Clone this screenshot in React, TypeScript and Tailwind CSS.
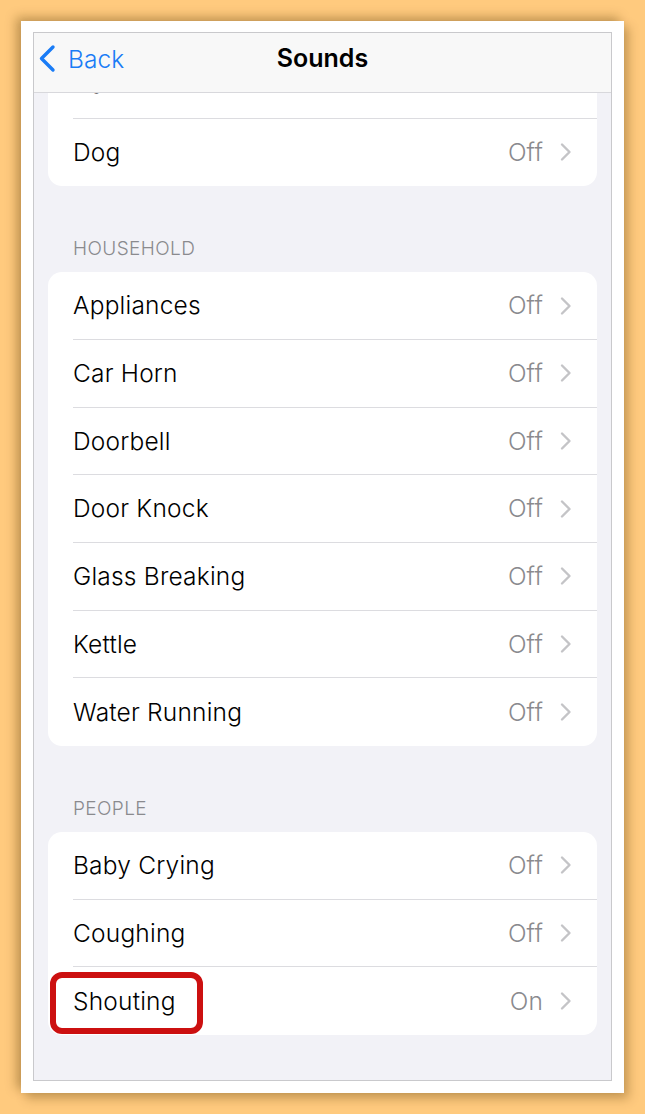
import React from "react";

type Row = { label: string; value: string; marked?: boolean };

const animals: Row[] = [
  { label: "Cat", value: "Off" },
  { label: "Dog", value: "Off" },
];

const household: Row[] = [
  { label: "Appliances", value: "Off" },
  { label: "Car Horn", value: "Off" },
  { label: "Doorbell", value: "Off" },
  { label: "Door Knock", value: "Off" },
  { label: "Glass Breaking", value: "Off" },
  { label: "Kettle", value: "Off" },
  { label: "Water Running", value: "Off" },
];

const people: Row[] = [
  { label: "Baby Crying", value: "Off" },
  { label: "Coughing", value: "Off" },
  { label: "Shouting", value: "On", marked: true },
];

function Chevron() {
  return (
    <svg width="13" height="20" viewBox="0 0 13 20" fill="none" className="shrink-0">
      <path
        d="M3 2.5 L10.5 10 L3 17.5"
        stroke="#c4c4c7"
        strokeWidth="2.4"
        strokeLinecap="round"
        strokeLinejoin="round"
      />
    </svg>
  );
}

function SettingsRow({ row, last }: { row: Row; last: boolean }) {
  return (
    <div className="relative h-[67.67px] pl-[25px]">
      <div
        className={`flex h-full items-center pr-[25px] ${
          last ? "" : "border-b border-[#dcdce0]"
        }`}
      >
        <span className="flex-1 text-[24.5px] font-light text-black tracking-[0.2px]">{row.label}</span>
        <span className="mr-[16px] text-[24.5px] font-light text-[#8a8a8e] tracking-[0.1px]">{row.value}</span>
        <Chevron />
      </div>
      {/* annotation box */}
      {row.marked && (
        <div className="absolute left-[2px] top-[5px] h-[62px] w-[153px] rounded-[12px] border-[6px] border-[#cc1010]" />
      )}
    </div>
  );
}

function Card({ rows }: { rows: Row[] }) {
  return (
    <div className="mx-[14px] rounded-[14px] bg-white">
      {rows.map((row, i) => (
        <SettingsRow key={row.label} row={row} last={i === rows.length - 1} />
      ))}
    </div>
  );
}

function SectionHeader({ title }: { title: string }) {
  return (
    <div className="pl-[39px] pt-[52px] pb-[12px] text-[19px] font-light leading-[22px] text-[#8a8a8e] tracking-[0.4px]">
      {title}
    </div>
  );
}

export default function App() {
  return (
    <div
      className="h-[1114px] w-[645px] bg-[#ffca7e] pl-[21px] pt-[21px]"
      style={{ fontFamily: "Inter, 'Noto Sans', sans-serif" }}
    >
      <div className="h-[1072px] w-[603px] bg-white px-[12px] pt-[11px] pb-[12px] shadow-[-5px_-4px_10px_rgba(90,60,10,0.35),5px_6px_10px_rgba(90,60,10,0.3)]">
        <div className="flex h-[1049px] flex-col overflow-hidden border border-[#c9c9cc] bg-[#f2f2f7]">
          {/* Nav bar */}
          <div className="relative z-10 flex h-[60px] shrink-0 items-center border-b border-[#d8d8dc] bg-[#f8f8f8] pb-[7px]">
            <div className="flex items-center pl-[4px]">
              <svg width="20" height="30" viewBox="0 0 20 30" fill="none">
                <path
                  d="M15 3 L3.5 14.5 L15 26"
                  stroke="#1a7cf6"
                  strokeWidth="3.4"
                  strokeLinecap="round"
                  strokeLinejoin="round"
                />
              </svg>
              <span className="ml-[10px] text-[24.5px] font-light text-[#1a7cf6] tracking-[0.1px]">Back</span>
            </div>
            <span className="pointer-events-none absolute left-0 right-0 text-center text-[25px] font-semibold text-black">
              Sounds
            </span>
          </div>

          {/* Scrolled content, first row sits under the nav bar */}
          <div className="flex-1 overflow-hidden">
            <div className="-mt-[42px]">
              <Card rows={animals} />
              <SectionHeader title="HOUSEHOLD" />
              <Card rows={household} />
              <SectionHeader title="PEOPLE" />
              <Card rows={people} />
            </div>
          </div>
        </div>
      </div>
    </div>
  );
}
